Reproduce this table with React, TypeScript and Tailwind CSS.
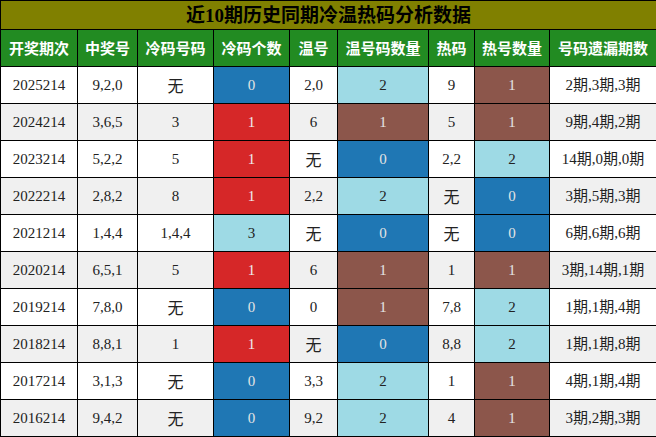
import React from "react"

type Cell = { v: string; c?: "blue" | "red" | "brown" | "lb" }

const headers = ["开奖期次", "中奖号", "冷码号码", "冷码个数", "温号", "温号码数量", "热码", "热号数量", "号码遗漏期数"]
const widths = [77, 60, 76, 76, 48, 91, 46, 75, 107]

const B = (v: string): Cell => ({ v, c: "blue" })
const R = (v: string): Cell => ({ v, c: "red" })
const N = (v: string): Cell => ({ v, c: "brown" })
const L = (v: string): Cell => ({ v, c: "lb" })
const P = (v: string): Cell => ({ v })

const rows: Cell[][] = [
  [P("2025214"), P("9,2,0"), P("无"), B("0"), P("2,0"), L("2"), P("9"), N("1"), P("2期,3期,3期")],
  [P("2024214"), P("3,6,5"), P("3"), R("1"), P("6"), N("1"), P("5"), N("1"), P("9期,4期,2期")],
  [P("2023214"), P("5,2,2"), P("5"), R("1"), P("无"), B("0"), P("2,2"), L("2"), P("14期,0期,0期")],
  [P("2022214"), P("2,8,2"), P("8"), R("1"), P("2,2"), L("2"), P("无"), B("0"), P("3期,5期,3期")],
  [P("2021214"), P("1,4,4"), P("1,4,4"), L("3"), P("无"), B("0"), P("无"), B("0"), P("6期,6期,6期")],
  [P("2020214"), P("6,5,1"), P("5"), R("1"), P("6"), N("1"), P("1"), N("1"), P("3期,14期,1期")],
  [P("2019214"), P("7,8,0"), P("无"), B("0"), P("0"), N("1"), P("7,8"), L("2"), P("1期,1期,4期")],
  [P("2018214"), P("8,8,1"), P("1"), R("1"), P("无"), B("0"), P("8,8"), L("2"), P("1期,1期,8期")],
  [P("2017214"), P("3,1,3"), P("无"), B("0"), P("3,3"), L("2"), P("1"), N("1"), P("4期,1期,4期")],
  [P("2016214"), P("9,4,2"), P("无"), B("0"), P("9,2"), L("2"), P("4"), N("1"), P("3期,2期,3期")],
]

const fill = {
  blue: "bg-[#1f77b4] text-[#e4e4e4]",
  red: "bg-[#d62728] text-[#eeeeee]",
  brown: "bg-[#8c564b] text-[#e4e4e4]",
  lb: "bg-[#9edae5] text-[#222222]",
}

export default function App() {
  return (
    <div className="w-[656px] h-[437px] bg-white font-['Liberation_Serif','Noto_Sans_CJK_SC',serif]">
      <table className="w-[656px] table-fixed border-collapse">
        <colgroup>
          {widths.map((w, i) => (
            <col key={i} style={{ width: w }} />
          ))}
        </colgroup>
        <thead>
          <tr className="h-[29px]">
            <th
              colSpan={9}
              className="border border-black bg-[#808000] text-black text-[19px] font-bold leading-none p-0"
            >
              近10期历史同期冷温热码分析数据
            </th>
          </tr>
          <tr className="h-[37px]">
            {headers.map((h) => (
              <th
                key={h}
                className="border border-black bg-[#228b22] text-white text-[15px] font-bold font-['Noto_Sans_CJK_SC',sans-serif] p-0 whitespace-nowrap"
              >
                {h}
              </th>
            ))}
          </tr>
        </thead>
        <tbody>
          {rows.map((r, i) => (
            <tr key={i} className={"h-[37px] " + (i % 2 ? "bg-[#f0f0f0]" : "bg-white")}>
              {r.map((c, j) => (
                <td
                  key={j}
                  className={
                    "border border-black text-center p-0 whitespace-nowrap " +
                    (c.v === "无" ? "text-[16px] text-[#111111] pt-[3px] " : "text-[15px] ") +
                    (c.c ? fill[c.c] : "text-[#222222]")
                  }
                >
                  {c.v}
                </td>
              ))}
            </tr>
          ))}
        </tbody>
      </table>
    </div>
  )
}
